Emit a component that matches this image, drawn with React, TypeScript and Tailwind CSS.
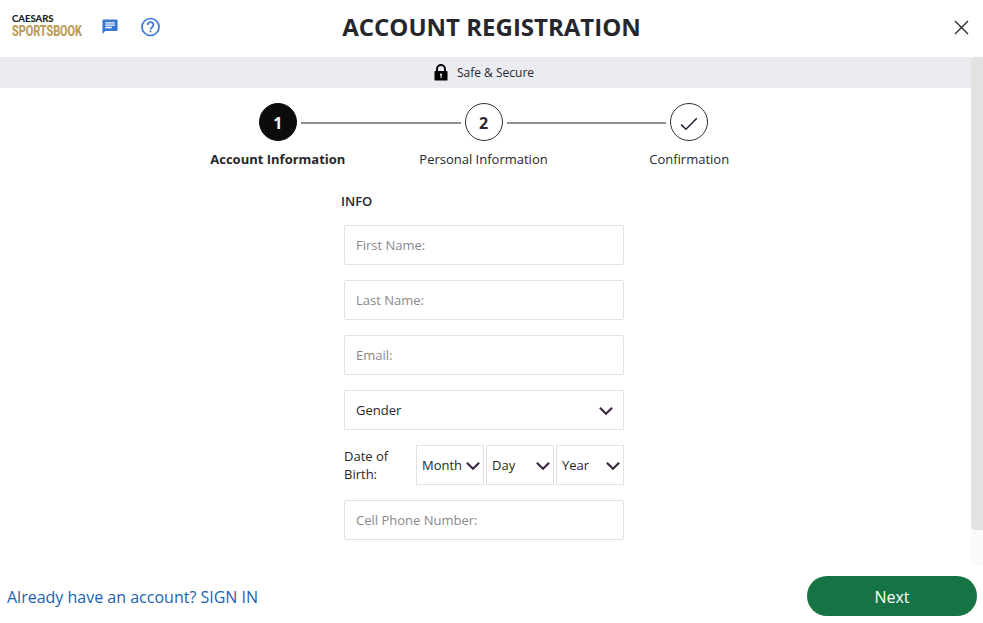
import { useState } from "react";
import type { ReactNode } from "react";

interface Step {
  label: string;
  marker: ReactNode;
}

const steps: Step[] = [
  { label: "Account Information", marker: "1" },
  { label: "Personal Information", marker: "2" },
  { label: "Confirmation", marker: <CheckIcon /> },
];

function Logo() {
  return (
    <svg width="71" height="30" viewBox="0 0 71 30" className="shrink-0 overflow-visible" role="img" aria-label="Caesars Sportsbook">
      <text
        x="0"
        y="10.2"
        textLength="41.5"
        lengthAdjust="spacingAndGlyphs"
        fill="#14251f"
        stroke="#14251f"
        strokeWidth="0.15"
        style={{ fontFamily: "Lato, sans-serif", fontSize: "9.2px", fontWeight: 700 }}
      >
        CAESARS
      </text>
      <text
        x="0"
        y="23.8"
        textLength="70"
        lengthAdjust="spacingAndGlyphs"
        fill="#bd9a55"
        stroke="#bd9a55"
        strokeWidth="0.2"
        style={{ fontFamily: "Roboto, sans-serif", fontSize: "15.4px", fontWeight: 700 }}
      >
        SPORTSBOOK
      </text>
    </svg>
  );
}

function ChatIcon() {
  return (
    <svg width="16" height="16" viewBox="0 0 16 16">
      <path d="M1.7 0.5h12.6a1.3 1.3 0 0 1 1.3 1.3v8.9a1.3 1.3 0 0 1-1.3 1.3H3.3L0.4 15V1.8a1.3 1.3 0 0 1 1.3-1.3z" fill="#3a79d2" />
      <path d="M3.3 3.9h9.4M3.3 6.2h9.4M3.3 8.5h6.4" stroke="#fff" strokeWidth="1.3" />
    </svg>
  );
}

function HelpIcon() {
  return (
    <svg width="20" height="20" viewBox="0 0 20 20" fill="none" stroke="#3a79d2">
      <circle cx="9.5" cy="10" r="8.5" strokeWidth="1.7" />
      <path d="M6.6 8a2.9 2.8 0 1 1 4.7 2.1c-1 .8-1.800 1.200-1.800 2.500" strokeWidth="1.8" />
      <path d="M9.5 13.500v1.800" strokeWidth="1.800" />
    </svg>
  );
}

function LockIcon() {
  return (
    <svg width="14" height="17" viewBox="0 0 14 17">
      <path d="M3 8V5a4 4 0 0 1 8 0v3" fill="none" stroke="#050505" strokeWidth="2" />
      <rect x="0.5" y="7.100" width="13" height="9.500" rx="0.600" fill="#050505" />
      <circle cx="7" cy="10.700" r="1.100" fill="#e5e5e5" />
      <path d="M7 11v3.200" stroke="#e5e5e5" strokeWidth="1" />
    </svg>
  );
}

function CheckIcon() {
  return (
    <svg width="18" height="14" viewBox="0 0 18 14" fill="none" className="mt-[3px]">
      <path d="M1.200 7.600L5.900 12.300L16.800 1.200" stroke="#1b2033" strokeWidth="1.500" />
    </svg>
  );
}

function Chevron() {
  return (
    <svg width="14" height="10" viewBox="0 0 14 10" fill="none" className="pointer-events-none mt-[2px] shrink-0">
      <path d="M0.900 1.800L7 7.800L13.100 1.800" stroke="#3d2843" strokeWidth="2.200" />
    </svg>
  );
}

function Stepper() {
  return (
    <ol className="ml-[175px] mt-[15px] flex w-[617px]">
      {steps.map((step, i) => (
        <li key={step.label} className="flex flex-1 flex-col items-center">
          <div className="flex w-full items-center">
            <span className={i > 0 ? "mt-px h-0.5 flex-1 bg-[#8f9094]" : "flex-1"} />
            <span
              className={
                i === 0
                  ? "mx-1 flex size-[38px] items-center justify-center rounded-full border border-[#0c0c0d] bg-[#0c0c0d] pt-px text-base font-bold text-white"
                  : "mx-1 flex size-[38px] items-center justify-center rounded-full border border-[#303238] pt-px text-base font-bold"
              }
            >
              {step.marker}
            </span>
            <span className={i < steps.length - 1 ? "mt-px h-0.5 flex-1 bg-[#8f9094]" : "flex-1"} />
          </div>
          <span className={i === 0 ? "mt-[9px] text-[13px] leading-[18px] font-bold" : "mt-[9px] text-[13px] leading-[18px]"}>
            {step.label}
          </span>
        </li>
      ))}
    </ol>
  );
}

function TextField({ label, type = "text" }: { label: string; type?: string }) {
  return (
    <input
      type={type}
      placeholder={label}
      aria-label={label}
      className="h-10 w-full rounded-[2px] border border-[#e2e2e3] px-[11px] text-[13px] outline-none placeholder:text-[#88898b]"
    />
  );
}

function DateSelect({ label }: { label: string }) {
  return (
    <button className="flex h-10 w-[68px] items-center justify-between border border-[#e2e2e3] pl-[5px] pr-[3px] text-[13px]">
      <span className="pt-px">{label}</span>
      <Chevron />
    </button>
  );
}

export default function App() {
  const [open, setOpen] = useState(true);

  if (!open) return null;

  return (
    <div className="flex h-[623px] w-[983px] flex-col overflow-hidden bg-white font-['Open_Sans','Noto_Sans',sans-serif] text-[#25272d]">
      <header className="grid h-[57px] shrink-0 grid-cols-[1fr_auto_1fr] items-center pl-[14px] pr-[14px] pb-1">
        <div className="-ml-0.5 flex items-center">
          <Logo />
          <button className="ml-[19px]" aria-label="Chat">
            <ChatIcon />
          </button>
          <button className="ml-[23px]" aria-label="Help">
            <HelpIcon />
          </button>
        </div>
        <h1 className="text-2xl leading-8 font-bold">ACCOUNT REGISTRATION</h1>
        <button className="mt-0.5 justify-self-end" aria-label="Close" onClick={() => setOpen(false)}>
          <svg width="15" height="15" viewBox="0 0 15 15">
            <path d="M1 1l13 13M14 1L1 14" stroke="#25272d" strokeWidth="1.3" />
          </svg>
        </button>
      </header>

      <div className="flex h-[509px] shrink-0">
        <main className="flex-1">
          <div className="flex h-[31px] items-center justify-center gap-[9px] bg-[#ebecf2] pr-[3px] text-xs">
            <LockIcon />
            <span className="pt-px">Safe &amp; Secure</span>
          </div>

          <Stepper />

          <form className="ml-[344px] mt-6 w-[280px]" onSubmit={(e) => e.preventDefault()}>
            <h2 className="-ml-[3px] text-[13px] leading-[18px] font-semibold">INFO</h2>
            <div className="mt-[15px] flex flex-col gap-[15px]">
              <TextField label="First Name:" />
              <TextField label="Last Name:" />
              <TextField label="Email:" type="email" />
              <button className="flex h-10 items-center justify-between border border-[#e2e2e3] pl-[11px] pr-[10px] text-[13px]">
                <span className="pt-px">Gender</span>
                <Chevron />
              </button>
              <div className="flex items-center">
                <span className="w-[72px] pr-4 text-[13px] leading-[18px]">Date of Birth:</span>
                <div className="flex gap-0.5">
                  <DateSelect label="Month" />
                  <DateSelect label="Day" />
                  <DateSelect label="Year" />
                </div>
              </div>
              <TextField label="Cell Phone Number:" type="tel" />
            </div>
          </form>
        </main>
        <div className="w-3 rounded-l bg-[#fafafa]">
          <div className="h-[473px] rounded-l bg-[#e2e2e2]" />
        </div>
      </div>

      <footer className="flex flex-1 items-center justify-between pl-[7px] pr-1.5 pt-[3px]">
        <a href="#" className="pt-px text-base text-[#1a62b3]">
          Already have an account? SIGN IN
        </a>
        <button className="h-10 w-[170px] rounded-full bg-[#167344] pt-px text-base text-white">Next</button>
      </footer>
    </div>
  );
}
